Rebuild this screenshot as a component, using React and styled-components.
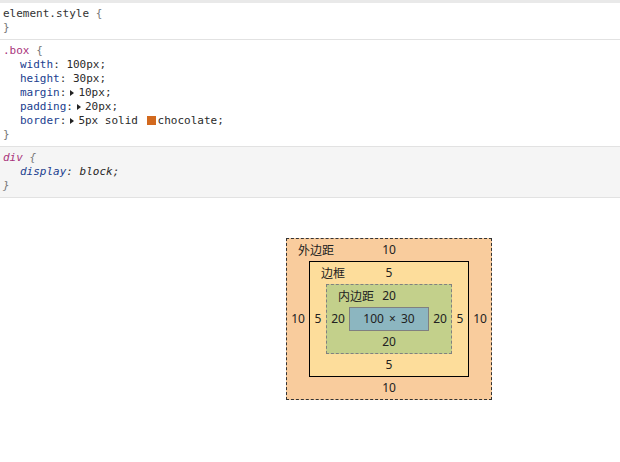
import styled, { createGlobalStyle } from "styled-components";

const GlobalStyle = createGlobalStyle`
  body {
    margin: 0;
    background: #fff;
  }
`;

const layers = [
  { label: "外边距", value: 10, side: 22, bg: "#f9cc9d", line: "dashed #333" },
  { label: "边框", value: 5, side: 16, bg: "#fddd9b", line: "solid #000" },
  { label: "内边距", value: 20, side: 22, bg: "#c3d08b", line: "dashed #808080" },
];

const BoxModel = ({ level = 0 }) => {
  const layer = layers[level];
  if (!layer) return <Content>100 × 30</Content>;

  return (
    <Layer $side={layer.side} $bg={layer.bg} $line={layer.line}>
      <LayerLabel>{layer.label}</LayerLabel>
      <Edge $row={1}>{layer.value}</Edge>
      <Side $col={1}>{layer.value}</Side>
      <BoxModel level={level + 1} />
      <Side $col={3}>{layer.value}</Side>
      <Edge $row={3}>{layer.value}</Edge>
    </Layer>
  );
};

const App = () => {
  return (
    <>
      <GlobalStyle />
      <Pane>
        <TopBar />
        <Rule>
          <Line>
            <Plain>element.style</Plain> <Brace>{"{"}</Brace>
          </Line>
          <Line>
            <Brace>{"}"}</Brace>
          </Line>
        </Rule>
        <Rule>
          <Line>
            <Selector>.box</Selector> <Brace>{"{"}</Brace>
          </Line>
          <PropLine>
            <PropName>width</PropName>: <Value>100px</Value>;
          </PropLine>
          <PropLine>
            <PropName>height</PropName>: <Value>30px</Value>;
          </PropLine>
          <PropLine>
            <PropName>margin</PropName>:<Expander />
            <Value>10px</Value>;
          </PropLine>
          <PropLine>
            <PropName>padding</PropName>:<Expander />
            <Value>20px</Value>;
          </PropLine>
          <PropLine>
            <PropName>border</PropName>:<Expander />
            <Value>
              5px solid <Swatch $color="chocolate" />
              chocolate
            </Value>
            ;
          </PropLine>
          <Line>
            <Brace>{"}"}</Brace>
          </Line>
        </Rule>
        <Rule $agent>
          <Line>
            <Selector>div</Selector> <Brace>{"{"}</Brace>
          </Line>
          <PropLine>
            <PropName>display</PropName>: <Value>block</Value>;
          </PropLine>
          <Line>
            <Brace>{"}"}</Brace>
          </Line>
        </Rule>
      </Pane>
      <Metrics>
        <BoxModel />
      </Metrics>
    </>
  );
};

export default App;

const Pane = styled.div`
  display: flex;
  flex-direction: column;
  font-family: "DejaVu Sans Mono", "Liberation Mono", monospace;
  font-size: 11px;
  line-height: 14px;
  color: #333;
`;

const TopBar = styled.div`
  height: 3px;
  background: #e9e9e9;
`;

const Rule = styled.div`
  padding: 4px 0;
  border-bottom: 1px solid #e2e2e2;
  background: ${({ $agent }) => ($agent ? "#f5f5f5" : "#fff")};
  font-style: ${({ $agent }) => ($agent ? "italic" : "normal")};
`;

const Line = styled.div`
  height: 14px;
  padding-left: 3px;
  white-space: pre;
`;

const PropLine = styled(Line)`
  padding-left: 20px;
`;

const Plain = styled.span`
  color: #333;
`;

const Selector = styled.span`
  color: #a8327a;
`;

const Brace = styled.span`
  color: #777;
`;

const PropName = styled.span`
  color: #21408f;
`;

const Value = styled.span`
  color: #2a2a2a;
`;

const Expander = styled.span`
  display: inline-block;
  width: 0;
  height: 0;
  margin: 0 4px 0 4px;
  border-left: 4px solid #222;
  border-top: 3px solid transparent;
  border-bottom: 3px solid transparent;
  vertical-align: middle;
`;

const Swatch = styled.span`
  display: inline-block;
  width: 9px;
  height: 9px;
  margin: 0 2px 0 2px;
  background: ${({ $color }) => $color};
  vertical-align: -1px;
`;

const Metrics = styled.div`
  display: flex;
  padding: 40px 0 0 286px;
  font-family: "Noto Sans", "Noto Sans CJK SC", sans-serif;
  font-size: 12px;
  line-height: 1;
  color: #222;
`;

const Layer = styled.div`
  display: grid;
  grid-template-columns: ${({ $side }) => $side}px auto ${({ $side }) => $side}px;
  grid-template-rows: 22px auto 22px;
  grid-row: 2;
  grid-column: 2;
  place-items: center;
  background: ${({ $bg }) => $bg};
  border: 1px ${({ $line }) => $line};
`;

const LayerLabel = styled.span`
  grid-row: 1;
  grid-column: 1 / -1;
  justify-self: start;
  margin-left: 11px;
  font-family: "Noto Sans CJK SC", sans-serif;
`;

const Edge = styled.span`
  grid-row: ${({ $row }) => $row};
  grid-column: 1 / -1;
`;

const Side = styled.span`
  grid-row: 2;
  grid-column: ${({ $col }) => $col};
`;

const Content = styled.div`
  grid-row: 2;
  grid-column: 2;
  display: flex;
  align-items: center;
  justify-content: center;
  box-sizing: border-box;
  width: 80px;
  height: 24px;
  border: 1px solid #808080;
  background: #8cb6c0;
  word-spacing: 2px;
`;
